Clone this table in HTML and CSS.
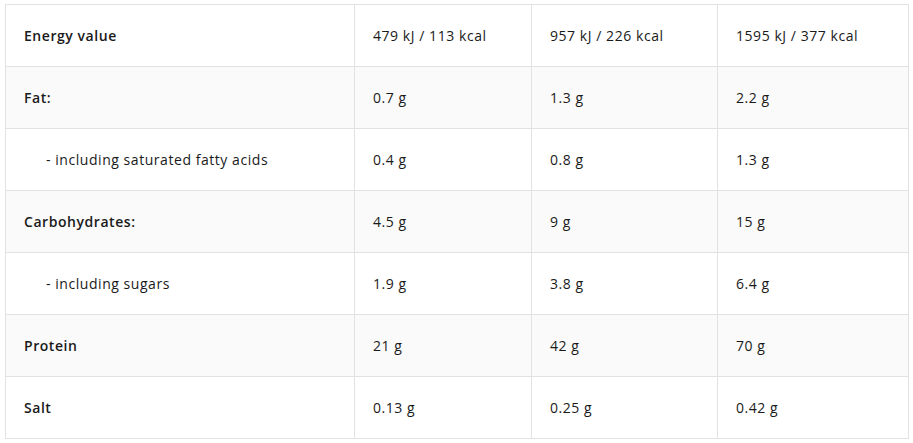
FILE: index.html
```html
<!DOCTYPE html>
<html lang="en">
<head>
<meta charset="utf-8">
<title>Nutrition facts</title>
<link rel="stylesheet" href="styles.css">
</head>
<body>
<div class="wrap">
<table class="nutri">
<colgroup>
<col class="c1"><col class="c2"><col class="c3"><col class="c4">
</colgroup>
<tbody>
<tr><td class="label">Energy value</td><td>479 kJ / 113 kcal</td><td>957 kJ / 226 kcal</td><td>1595 kJ / 377 kcal</td></tr>
<tr class="alt"><td class="label">Fat:</td><td>0.7 g</td><td>1.3 g</td><td>2.2 g</td></tr>
<tr><td class="sub">- including saturated fatty acids</td><td>0.4 g</td><td>0.8 g</td><td>1.3 g</td></tr>
<tr class="alt"><td class="label">Carbohydrates:</td><td>4.5 g</td><td>9 g</td><td>15 g</td></tr>
<tr><td class="sub">- including sugars</td><td>1.9 g</td><td>3.8 g</td><td>6.4 g</td></tr>
<tr class="alt"><td class="label">Protein</td><td>21 g</td><td>42 g</td><td>70 g</td></tr>
<tr><td class="label">Salt</td><td>0.13 g</td><td>0.25 g</td><td>0.42 g</td></tr>
</tbody>
</table>
</div>
</body>
</html>
```
FILE: styles.css
```css
html, body {
  margin: 0;
  padding: 0;
  background: #ffffff;
}
body {
  font-family: "Open Sans", "Noto Sans", sans-serif;
  font-size: 14px;
  letter-spacing: 0.55px;
  color: #1a1a1a;
}
.wrap {
  padding: 4px 5px;
}
.nutri {
  border-collapse: collapse;
  table-layout: fixed;
  width: 903px;
}
.c1 { width: 349px; }
.c2 { width: 177px; }
.c3 { width: 186px; }
.c4 { width: 191px; }
.nutri td {
  border: 1px solid #e2e2e2;
  padding: 20px 18px;
  line-height: 21px;
  white-space: nowrap;
}
.nutri tr.alt td {
  background: #fafafa;
}
.nutri td.label {
  font-weight: 600;
}
.nutri td.sub {
  padding-left: 40px;
}
```
